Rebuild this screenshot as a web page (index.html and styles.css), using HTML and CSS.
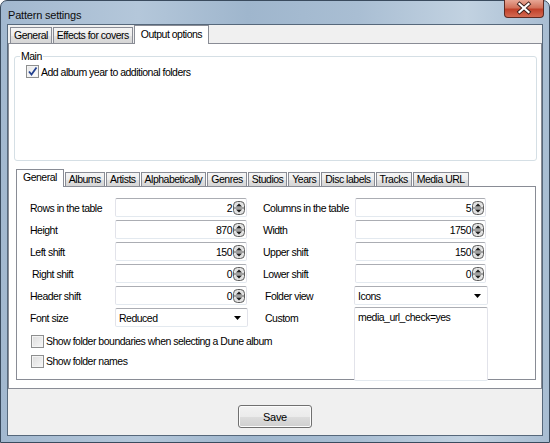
FILE: index.html
```html
<!DOCTYPE html>
<html lang="en">
<head>
  <meta charset="UTF-8" />
  <title>Pattern settings</title>
  <link rel="stylesheet" href="styles.css">
</head>
<body>
  <div class="window">
    <div class="titlebar">
      <span class="title">Pattern settings</span>
      <span class="close">
        <svg width="40" height="18" viewBox="0 0 40 18">
          <path d="M15.5 5 L24.5 13 M24.5 5 L15.5 13" stroke="#3b1e1a" stroke-width="4" stroke-linecap="square"/>
          <path d="M15.5 5 L24.5 13 M24.5 5 L15.5 13" stroke="#fff" stroke-width="2.2" stroke-linecap="square"/>
        </svg>
      </span>
    </div>

    <div class="client">
      <div class="tabs outer-tabs">
        <span class="tab">General</span>
        <span class="tab">Effects for covers</span>
        <span class="tab active">Output options</span>
      </div>

      <div class="page">
        <fieldset class="group">
          <legend>Main</legend>
          <div class="group-body">
            <label class="check"><span class="box checked"><svg width="11" height="11" viewBox="0 0 11 11"><path d="M2 5.5 L4.5 8.5 L9.5 1.5" fill="none" stroke="#23418f" stroke-width="1.8"/></svg></span>Add album year to additional folders</label>
          </div>
        </fieldset>

        <div class="tabs inner-tabs">
          <span class="tab active">General</span>
          <span class="tab">Albums</span>
          <span class="tab">Artists</span>
          <span class="tab">Alphabetically</span>
          <span class="tab">Genres</span>
          <span class="tab">Studios</span>
          <span class="tab">Years</span>
          <span class="tab">Disc labels</span>
          <span class="tab">Tracks</span>
          <span class="tab">Media URL</span>
        </div>

        <div class="inner-page">
          <div class="form">
            <span class="lbl">Rows in the table</span>
            <div class="field spin"><span class="val">2</span><svg class="spinner" width="12" height="14" viewBox="0 0 12 14"><rect x="0.5" y="0.5" width="11" height="13" rx="4" fill="#e2e2e2" stroke="#5e5e5e"/><line x1="1" y1="7" x2="11" y2="7" stroke="#5e5e5e"/><path d="M3 5.5 H9 L6 2.5 Z M3 8.5 H9 L6 11.5 Z" fill="#1e1e1e"/></svg></div>
            <span class="lbl">Columns in the table</span>
            <div class="field spin right"><span class="val">5</span><svg class="spinner" width="12" height="14" viewBox="0 0 12 14"><rect x="0.5" y="0.5" width="11" height="13" rx="4" fill="#e2e2e2" stroke="#5e5e5e"/><line x1="1" y1="7" x2="11" y2="7" stroke="#5e5e5e"/><path d="M3 5.5 H9 L6 2.5 Z M3 8.5 H9 L6 11.5 Z" fill="#1e1e1e"/></svg></div>

            <span class="lbl">Height</span>
            <div class="field spin"><span class="val">870</span><svg class="spinner" width="12" height="14" viewBox="0 0 12 14"><rect x="0.5" y="0.5" width="11" height="13" rx="4" fill="#e2e2e2" stroke="#5e5e5e"/><line x1="1" y1="7" x2="11" y2="7" stroke="#5e5e5e"/><path d="M3 5.5 H9 L6 2.5 Z M3 8.5 H9 L6 11.5 Z" fill="#1e1e1e"/></svg></div>
            <span class="lbl">Width</span>
            <div class="field spin right"><span class="val">1750</span><svg class="spinner" width="12" height="14" viewBox="0 0 12 14"><rect x="0.5" y="0.5" width="11" height="13" rx="4" fill="#e2e2e2" stroke="#5e5e5e"/><line x1="1" y1="7" x2="11" y2="7" stroke="#5e5e5e"/><path d="M3 5.5 H9 L6 2.5 Z M3 8.5 H9 L6 11.5 Z" fill="#1e1e1e"/></svg></div>

            <span class="lbl">Left shift</span>
            <div class="field spin"><span class="val">150</span><svg class="spinner" width="12" height="14" viewBox="0 0 12 14"><rect x="0.5" y="0.5" width="11" height="13" rx="4" fill="#e2e2e2" stroke="#5e5e5e"/><line x1="1" y1="7" x2="11" y2="7" stroke="#5e5e5e"/><path d="M3 5.5 H9 L6 2.5 Z M3 8.5 H9 L6 11.5 Z" fill="#1e1e1e"/></svg></div>
            <span class="lbl">Upper shift</span>
            <div class="field spin right"><span class="val">150</span><svg class="spinner" width="12" height="14" viewBox="0 0 12 14"><rect x="0.5" y="0.5" width="11" height="13" rx="4" fill="#e2e2e2" stroke="#5e5e5e"/><line x1="1" y1="7" x2="11" y2="7" stroke="#5e5e5e"/><path d="M3 5.5 H9 L6 2.5 Z M3 8.5 H9 L6 11.5 Z" fill="#1e1e1e"/></svg></div>

            <span class="lbl nudge">Right shift</span>
            <div class="field spin"><span class="val">0</span><svg class="spinner" width="12" height="14" viewBox="0 0 12 14"><rect x="0.5" y="0.5" width="11" height="13" rx="4" fill="#e2e2e2" stroke="#5e5e5e"/><line x1="1" y1="7" x2="11" y2="7" stroke="#5e5e5e"/><path d="M3 5.5 H9 L6 2.5 Z M3 8.5 H9 L6 11.5 Z" fill="#1e1e1e"/></svg></div>
            <span class="lbl">Lower shift</span>
            <div class="field spin right"><span class="val">0</span><svg class="spinner" width="12" height="14" viewBox="0 0 12 14"><rect x="0.5" y="0.5" width="11" height="13" rx="4" fill="#e2e2e2" stroke="#5e5e5e"/><line x1="1" y1="7" x2="11" y2="7" stroke="#5e5e5e"/><path d="M3 5.5 H9 L6 2.5 Z M3 8.5 H9 L6 11.5 Z" fill="#1e1e1e"/></svg></div>

            <span class="lbl">Header shift</span>
            <div class="field spin"><span class="val">0</span><svg class="spinner" width="12" height="14" viewBox="0 0 12 14"><rect x="0.5" y="0.5" width="11" height="13" rx="4" fill="#e2e2e2" stroke="#5e5e5e"/><line x1="1" y1="7" x2="11" y2="7" stroke="#5e5e5e"/><path d="M3 5.5 H9 L6 2.5 Z M3 8.5 H9 L6 11.5 Z" fill="#1e1e1e"/></svg></div>
            <span class="lbl nudge">Folder view</span>
            <div class="field select"><span class="val">Icons</span><svg width="7" height="4" viewBox="0 0 7 4"><path d="M0 0 H7 L3.5 4 Z" fill="#000"/></svg></div>

            <span class="lbl">Font size</span>
            <div class="field select"><span class="val">Reduced</span><svg width="7" height="4" viewBox="0 0 7 4"><path d="M0 0 H7 L3.5 4 Z" fill="#000"/></svg></div>
            <span class="lbl nudge">Custom</span>
            <div class="field memo">media_url_check=yes</div>

            <label class="check wide"><span class="box"></span>Show folder boundaries when selecting a Dune album</label>
            <label class="check wide"><span class="box"></span>Show folder names</label>
          </div>
        </div>
      </div>

      <div class="buttons">
        <button class="button">Save</button>
      </div>
    </div>
  </div>
</body>
</html>
```

FILE: styles.css
```css
* {
  box-sizing: border-box;
}

body {
  margin: 0;
  width: 550px;
  height: 443px;
  overflow: hidden;
  background-color: #fff;
  font-family: "Liberation Sans", Arial, sans-serif;
  font-size: 10.5px;
  letter-spacing: -0.5px;
  color: #000;
}

.window {
  width: 550px;
  height: 443px;
  display: flex;
  flex-direction: column;
  padding: 0 6px 6px 6px;
  border: 1px solid #3a4b5e;
  border-radius: 7px 7px 0 0;
  background: linear-gradient(to right, #a2b8cf 0%, #b4c7da 25%, #9fb6cd 45%, #a9bed3 65%, #c2d2e1 85%, #a8bdd2 100%);
}

.titlebar {
  height: 23px;
  display: flex;
  align-items: center;
  justify-content: space-between;
  padding-left: 1px;
}

.title {
  font-size: 11px;
  letter-spacing: -0.2px;
  color: #0c0c0c;
  margin-top: 4px;
}

.close {
  align-self: flex-start;
  width: 40px;
  height: 18px;
  margin-top: -1px;
  margin-right: -1px;
  border: 1px solid #5d2a22;
  border-top: none;
  border-radius: 0 0 4px 4px;
  background: linear-gradient(#e7a795 0%, #d2725b 45%, #c0412a 55%, #d46a52 100%);
}

.close svg {
  display: block;
  margin: -1px 0 0 -1px;
}

.client {
  flex: 1;
  display: flex;
  flex-direction: column;
  border: 1px solid #56687b;
  background-color: #f0f0f0;
}

/* tabs */

.tabs {
  display: flex;
  align-items: flex-end;
}

.tab {
  position: relative;
  border: 1px solid #898c95;
  border-bottom: none;
  margin-right: 1px;
  padding: 0 4px;
  background: linear-gradient(#f5f5f5 0%, #ededed 50%, #e1e1e1 51%, #d6d6d6 100%);
  white-space: nowrap;
}

.tab.active {
  background: #fff;
  z-index: 1;
}

.outer-tabs {
  height: 18px;
  padding-left: 2px;
}

.outer-tabs .tab {
  height: 16px;
  line-height: 15px;
  padding: 0 3px;
}

.outer-tabs .tab.active {
  height: 19px;
  margin-bottom: -1px;
  padding: 0 6px;
  line-height: 16px;
}

.page {
  height: 346px;
  border: 1px solid #898c95;
  background-color: #fff;
  padding-top: 7px;
}

.group {
  margin: 0 4px 0 5px;
  padding: 0 0 0 5px;
  border: 1px solid #d5dfe5;
  border-radius: 3px;
}

.group legend {
  padding: 0 1px;
  line-height: 11px;
}

.group-body {
  height: 98px;
  padding: 3px 0 0 6px;
}

.inner-tabs {
  height: 17px;
  margin: 8px 5px 0 7px;
}

.inner-tabs .tab {
  height: 14px;
  line-height: 13px;
  padding: 0 3px;
}

.inner-tabs .tab.active {
  height: 18px;
  margin-bottom: -1px;
  padding: 0 6px;
  line-height: 15px;
}

.inner-page {
  height: 194px;
  margin: 0 5px 0 7px;
  border: 1px solid #898c95;
  background-color: #fff;
  padding: 11px 0 0 13px;
}

/* form */

.form {
  display: grid;
  grid-template-columns: 85px 133px 15px 91px 134px;
  grid-template-rows: repeat(6, 19px) 22px 12px;
  row-gap: 3px;
  align-items: center;
}

.form > :nth-child(4n+3) {
  grid-column: 4;
}

.lbl {
  white-space: nowrap;
}

.lbl.nudge {
  padding-left: 2px;
}

.field {
  height: 19px;
  display: flex;
  align-items: center;
  border: 1px solid #e2e3ea;
  border-top-color: #abadb3;
  border-bottom-color: #e3e9ef;
  border-radius: 2px;
  background-color: #fff;
}

.spin {
  width: 132px;
  padding-right: 1px;
}

.spin.right {
  width: 131px;
  margin-left: 1px;
}

.spin .val {
  flex: 1;
  text-align: right;
  padding-right: 1px;
}

.spinner {
  display: block;
}

.select {
  padding: 0 6px 0 3px;
}

.select .val {
  flex: 1;
}

.memo {
  grid-column: 5;
  grid-row: 6 / span 3;
  align-self: start;
  height: 74px;
  margin-top: -1px;
  align-items: flex-start;
  padding: 3px 3px;
}

.check {
  display: flex;
  align-items: center;
  white-space: nowrap;
}

.check.wide {
  grid-column: 1 / span 4;
  padding-left: 1px;
}

.box {
  flex-shrink: 0;
  width: 13px;
  height: 13px;
  margin-right: 2px;
  border: 1px solid #8e8f8f;
  background: linear-gradient(135deg, #dcdcdc 0%, #f7f7f7 100%);
  box-shadow: inset 0 0 0 1px #f4f4f4;
  display: flex;
  align-items: center;
  justify-content: center;
}

.box.checked {
  background: linear-gradient(135deg, #e6e6e6 0%, #ffffff 100%);
}

/* bottom buttons */

.buttons {
  flex: 1;
  display: flex;
  justify-content: center;
  padding-top: 16px;
}

.button {
  width: 74px;
  height: 23px;
  font-family: inherit;
  font-size: 11px;
  letter-spacing: -0.3px;
  color: #000;
  border: 1px solid #707070;
  border-radius: 3px;
  background: linear-gradient(#f2f2f2 0%, #ebebeb 50%, #dddddd 51%, #cfcfcf 100%);
  box-shadow: inset 0 0 0 1px #fcfcfc;
}
```
